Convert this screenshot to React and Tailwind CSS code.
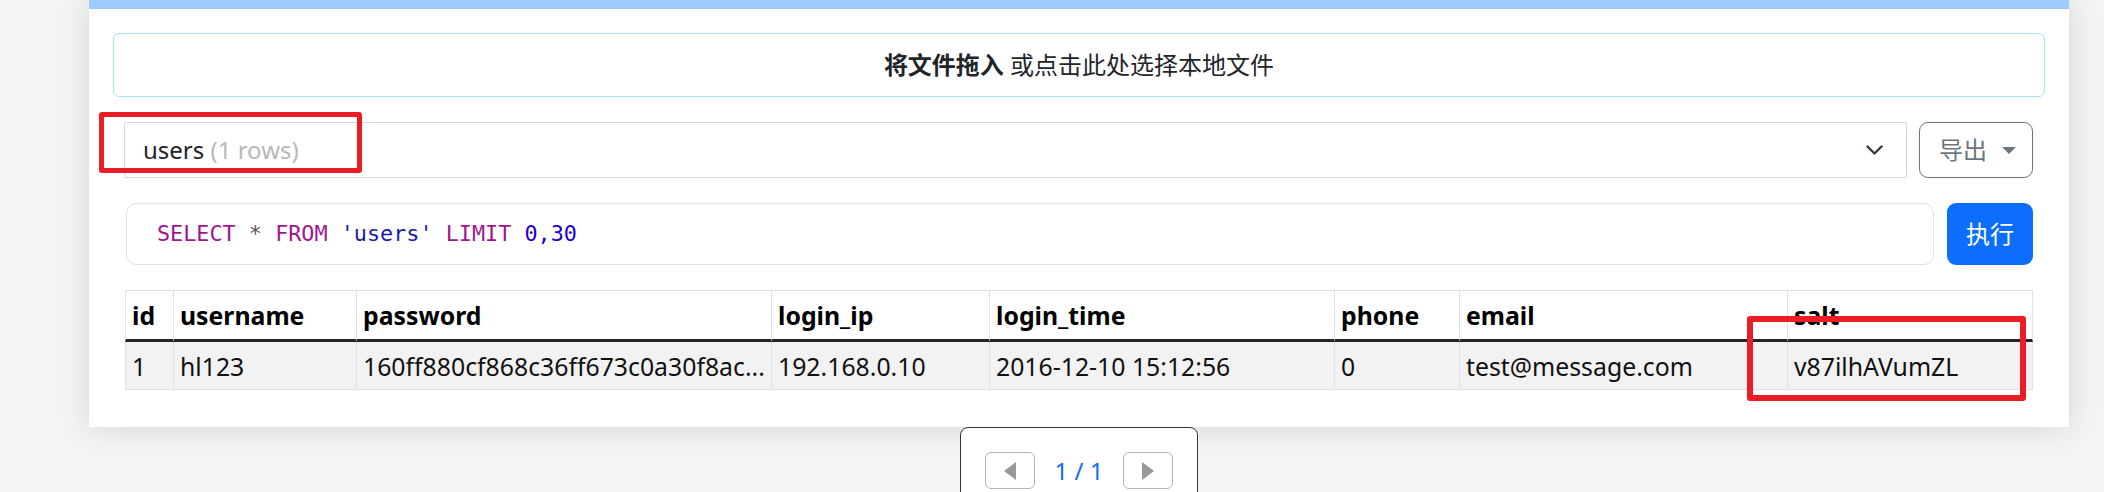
import React from "react";

const cols = [
  { k: "id", w: 49, v: "1" },
  { k: "username", w: 183, v: "hl123" },
  { k: "password", w: 415, v: "160ff880cf868c36ff673c0a30f8ac..." },
  { k: "login_ip", w: 218, v: "192.168.0.10" },
  { k: "login_time", w: 345, v: "2016-12-10 15:12:56" },
  { k: "phone", w: 125, v: "0" },
  { k: "email", w: 328, v: "test@message.com" },
  { k: "salt", w: 245, v: "v87ilhAVumZL" },
];

export default function App() {
  return (
    <div className="relative h-[492px] w-[2104px] overflow-hidden bg-[#f4f4f4] font-['Noto_Sans','Noto_Sans_CJK_SC',sans-serif] text-[#212529]">
      <div className="ml-[89px] w-[1980px]">
        <div className="border-t-[9px] border-[#9ecbfd] bg-white pt-[24px] pb-[37px] shadow-[0_0_30px_rgba(0,0,0,0.13)]">
          {/* drop zone */}
          <div className="mx-[24px] flex h-[64px] items-center justify-center rounded-[6px] border border-[#a3e5f0] text-[24px] leading-[36px]">
            <span className="font-bold">将文件拖入</span>
            <span>&nbsp;或点击此处选择本地文件</span>
          </div>

          <div className="ml-[35px] mr-[36px]">
            {/* select row */}
            <div className="mt-[25px] flex h-[56px] gap-[12px]">
              <div className="flex flex-1 items-center justify-between rounded-[2px] border border-[#d5d8dc] pl-[18px] pr-[23px] text-[24px] leading-[36px]">
                <div>
                  <span className="text-[#212529]">users</span>
                  <span className="text-[#b8b8b8]"> (1 rows)</span>
                </div>
                <svg width="17" height="10" viewBox="0 0 17 10" fill="none">
                  <path d="M1.5 1.5 L8.5 8.5 L15.5 1.5" stroke="#343a40" strokeWidth="2.4" strokeLinecap="round" strokeLinejoin="round" />
                </svg>
              </div>
              <div className="flex w-[114px] items-center rounded-[9px] border border-[#6c757d] pl-[19px] text-[24px] leading-[36px] text-[#6c757d]">
                <span>导出</span>
                <svg className="ml-[15px]" width="14" height="7" viewBox="0 0 14 7">
                  <path d="M0 0 L14 0 L7 7 Z" fill="#6c757d" />
                </svg>
              </div>
            </div>

            {/* sql row */}
            <div className="mt-[25px] flex h-[62px] gap-[13px]">
              <div className="ml-[2px] flex flex-1 items-center rounded-[10px] border border-[#dee2e6] pl-[30px] font-['DejaVu_Sans_Mono',monospace] text-[21.8px] whitespace-pre">
                <span className="text-[#a0168f]">SELECT</span>
                <span className="text-[#555555]"> * </span>
                <span className="text-[#a0168f]">FROM</span>
                <span> </span>
                <span className="text-[#1a1aa6]">'users'</span>
                <span> </span>
                <span className="text-[#a0168f]">LIMIT</span>
                <span> </span>
                <span className="text-[#1c00cf]">0,30</span>
              </div>
              <div className="flex w-[86px] items-center justify-center rounded-[9px] bg-[#0d6efd] text-[24px] text-white">
                执行
              </div>
            </div>

            {/* table */}
            <table className="mt-[25px] ml-[1px] w-[1908px] table-fixed border-separate border-spacing-0 text-[24.8px] leading-[36px]">
              <colgroup>
                {cols.map((c) => (
                  <col key={c.k} style={{ width: c.w }} />
                ))}
              </colgroup>
              <thead>
                <tr>
                  {cols.map((c, i) => (
                    <th
                      key={c.k}
                      className={
                        "h-[52px] border-t border-r border-b-[3px] border-t-[#dee2e6] border-r-[#dee2e6] border-b-[#212529] px-[6px] pt-[6px] pb-[6px] text-left font-bold whitespace-nowrap text-black " +
                        (i === 0 ? "border-l border-l-[#dee2e6]" : "")
                      }
                    >
                      {c.k}
                    </th>
                  ))}
                </tr>
              </thead>
              <tbody>
                <tr>
                  {cols.map((c, i) => (
                    <td
                      key={c.k}
                      className={
                        "h-[48px] overflow-hidden border-r border-b border-[#dee2e6] bg-[#f2f2f2] px-[6px] pt-[6px] pb-[5px] whitespace-nowrap text-[#111]" +
                        (i === 0 ? " border-l" : "")
                      }
                    >
                      {c.v}
                    </td>
                  ))}
                </tr>
              </tbody>
            </table>
          </div>
        </div>

        {/* pagination */}
        <div className="mx-auto flex h-[90px] w-[238px] justify-center gap-[20px] rounded-t-[8px] border border-[#333] bg-white pt-[24px]">
          <div className="flex h-[37px] w-[50px] items-center justify-center rounded-[6px] border border-[#b5b5b5]">
            <svg width="12" height="18" viewBox="0 0 12 18">
              <path d="M12 0 L12 18 L0 9 Z" fill="#9a9a9a" />
            </svg>
          </div>
          <div className="h-[37px] text-[24px] leading-[37px] text-[#0d6efd]">1 / 1</div>
          <div className="flex h-[37px] w-[50px] items-center justify-center rounded-[6px] border border-[#b5b5b5]">
            <svg width="12" height="18" viewBox="0 0 12 18">
              <path d="M0 0 L0 18 L12 9 Z" fill="#9a9a9a" />
            </svg>
          </div>
        </div>
      </div>

      {/* annotation boxes */}
      <div className="absolute left-[99px] top-[112px] h-[61px] w-[263px] rounded-[3px] border-[5px] border-[#ec1c24]" />
      <div className="absolute left-[1747px] top-[316px] h-[85px] w-[279px] rounded-[3px] border-[6px] border-[#ec1c24]" />
    </div>
  );
}
